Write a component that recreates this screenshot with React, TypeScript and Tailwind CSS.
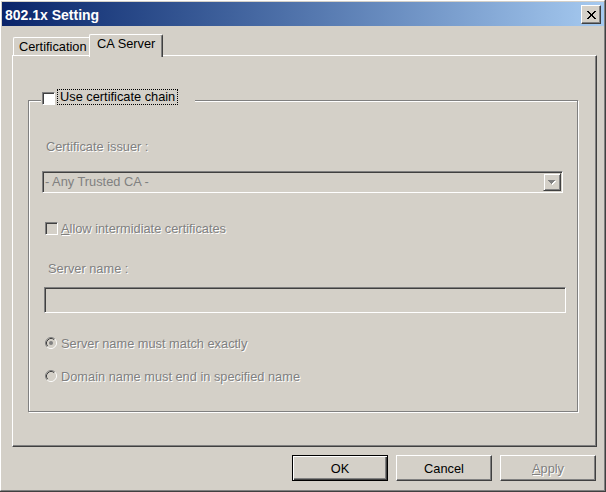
import React from "react";

const dis = "text-[#808080] [text-shadow:1px_1px_0_#ffffff]";

function Checkbox({ enabled, className = "" }: { enabled?: boolean; className?: string }) {
  return (
    <div
      className={`w-[13px] h-[13px] shrink-0 border border-t-[#808080] border-l-[#808080] border-r-white border-b-white shadow-[inset_1px_1px_0_#404040] ${
        enabled ? "bg-white" : "bg-[#d4d0c8]"
      } ${className}`}
    />
  );
}

function Radio({ checked }: { checked?: boolean }) {
  return (
    <svg width="12" height="12" viewBox="0 0 12 12" className="shrink-0 mt-[2px]">
      <circle cx="6" cy="6" r="4.5" fill="#d4d0c8" />
      <path d="M2.11 9.89 A5.5 5.5 0 0 1 9.89 2.11" fill="none" stroke="#808080" strokeWidth="1" />
      <path d="M9.89 2.11 A5.5 5.5 0 0 1 2.11 9.89" fill="none" stroke="#ffffff" strokeWidth="1" />
      <path d="M2.82 9.18 A4.5 4.5 0 0 1 9.18 2.82" fill="none" stroke="#404040" strokeWidth="1" />
      <path d="M9.18 2.82 A4.5 4.5 0 0 1 2.82 9.18" fill="none" stroke="#d4d0c8" strokeWidth="1" />
      {checked && <circle cx="6" cy="6" r="2" fill="#808080" />}
    </svg>
  );
}

function CloseGlyph() {
  const rows = [
    [0, 1, 7, 8],
    [1, 2, 6, 7],
    [2, 3, 5, 6],
    [3, 4, 5],
    [3, 4, 5],
    [2, 3, 5, 6],
    [1, 2, 6, 7],
    [0, 1, 7, 8],
  ];
  return (
    <svg width="9" height="8" viewBox="0 0 9 8" shapeRendering="crispEdges">
      {rows.map((r, y) => r.map((x) => <rect key={`${x}-${y}`} x={x} y={y} width="1" height="1" fill="#000" />))}
    </svg>
  );
}

function Arrow() {
  const rows = [
    [0, 7],
    [1, 5],
    [2, 3],
    [3, 1],
  ];
  return (
    <svg width="8" height="5" viewBox="0 0 8 5" shapeRendering="crispEdges">
      {rows.map(([x, w], y) => (
        <rect key={`s${y}`} x={x + 1} y={y + 1} width={w} height="1" fill="#ffffff" />
      ))}
      {rows.map(([x, w], y) => (
        <rect key={`g${y}`} x={x} y={y} width={w} height="1" fill="#808080" />
      ))}
    </svg>
  );
}

function Button({
  children,
  def,
}: {
  children: React.ReactNode;
  def?: boolean;
}) {
  return (
    <div
      className={`w-[96px] h-[26px] flex items-center justify-center ${
        def
          ? "border border-black shadow-[inset_1px_1px_0_#ffffff,inset_-1px_-1px_0_#404040,inset_-2px_-2px_0_#808080]"
          : "border border-t-white border-l-white border-r-[#404040] border-b-[#404040] shadow-[inset_-1px_-1px_0_#808080]"
      }`}
    >
      {children}
    </div>
  );
}

export default function App() {
  return (
    <div className="w-[606px] h-[492px] bg-[#d4d0c8] border-r border-b border-r-[#404040] border-b-[#404040] font-['Liberation_Sans',Arial,sans-serif] text-[12.8px] leading-[15px] text-black select-none">
      <div className="h-full flex flex-col border-l border-t border-r border-b border-l-white border-t-white border-r-[#808080] border-b-[#808080] pl-px pt-px pb-px">
        {/* Title bar */}
        <div className="h-[24px] shrink-0 flex items-start justify-between bg-linear-to-r from-[#0a246a] to-[#a6caf0]">
          <div className="pl-[3px] pt-[5px] text-white font-bold text-[14px] leading-[17px]">802.1x Setting</div>
          <div className="mt-[3px] mr-[3px] w-[20px] h-[19px] bg-[#d4d0c8] border border-t-white border-l-white border-r-[#404040] border-b-[#404040] shadow-[inset_-1px_-1px_0_#808080] flex items-center justify-center pl-[1px]">
            <CloseGlyph />
          </div>
        </div>

        {/* Tabs */}
        <div className="mt-[8px] ml-[10px] h-[21px] flex items-start">
          <div className="ml-px mt-[3px] h-[18px] w-[77px] border-l border-t border-l-white border-t-white rounded-tl-[2px] pl-[5px] pt-px whitespace-nowrap">
            Certification
          </div>
          <div className="relative z-10 ml-[-1px] h-[23px] w-[74px] bg-[#d4d0c8] border-l border-t border-r border-l-white border-t-white border-r-[#404040] rounded-tl-[2px] rounded-tr-[2px] shadow-[inset_-1px_0_0_#808080] pl-[7px] pt-[1px] whitespace-nowrap">
            CA Server
          </div>
        </div>

        {/* Panel */}
        <div className="ml-[10px] w-[585px] h-[392px] shrink-0 border border-t-white border-l-white border-r-[#404040] border-b-[#404040] shadow-[inset_-1px_-1px_0_#808080]">
          <div className="relative ml-[15px] mt-[44px] w-[550px] h-[312px] border border-[#808080] shadow-[inset_1px_1px_0_#ffffff,1px_1px_0_#ffffff] flex flex-col items-start">
            {/* Legend */}
            <div className="absolute left-[12px] top-[-12px] h-[16px] flex items-start gap-[2px] bg-[#d4d0c8] pl-px pr-[17px]">
              <Checkbox enabled className="mt-[3px]" />
              <div className="h-[16px] border border-dotted border-black px-[2px] leading-[14px] whitespace-nowrap">
                Use certificate chain
              </div>
            </div>

            <div className={`ml-[17px] mt-[38px] ${dis}`}>Certificate issuer :</div>

            <div className="ml-[13px] mt-[17px] w-[521px] h-[22px] p-px flex border border-t-[#808080] border-l-[#808080] border-r-white border-b-white shadow-[inset_1px_1px_0_#404040]">
              <div className="flex-1 pl-px pt-[1px] text-[#808080] whitespace-nowrap">- Any Trusted CA -</div>
              <div className="w-[18px] h-[18px] border border-t-[#d4d0c8] border-l-[#d4d0c8] border-r-[#404040] border-b-[#404040] shadow-[inset_1px_1px_0_#ffffff,inset_-1px_-1px_0_#808080] flex items-center justify-center pt-px">
                <Arrow />
              </div>
            </div>

            <div className="ml-[16px] mt-[27px] h-[15px] flex items-start gap-[3px]">
              <Checkbox className="mt-[2px]" />
              <div className={`whitespace-nowrap mt-px ${dis}`}>
                <span className="underline">A</span>llow intermidiate certificates
              </div>
            </div>

            <div className={`ml-[19px] mt-[26px] ${dis}`}>Server name :</div>

            <div className="ml-[15px] mt-[11px] w-[522px] h-[26px] border border-t-[#808080] border-l-[#808080] border-r-white border-b-white shadow-[inset_1px_1px_0_#404040]" />

            <div className="ml-[16px] mt-[22px] h-[15px] flex items-start gap-[4px]">
              <Radio checked />
              <div className={`whitespace-nowrap mt-px ${dis}`}>Server name must match exactly</div>
            </div>

            <div className="ml-[16px] mt-[18px] h-[15px] flex items-start gap-[4px]">
              <Radio />
              <div className={`whitespace-nowrap mt-px ${dis}`}>Domain name must end in specified name</div>
            </div>
          </div>
        </div>

        {/* Buttons */}
        <div className="mt-[8px] flex justify-end gap-[8px] pr-[8px]">
          <Button def>OK</Button>
          <Button>Cancel</Button>
          <Button>
            <span className={dis}>
              <span className="underline">A</span>pply
            </span>
          </Button>
        </div>
      </div>
    </div>
  );
}
